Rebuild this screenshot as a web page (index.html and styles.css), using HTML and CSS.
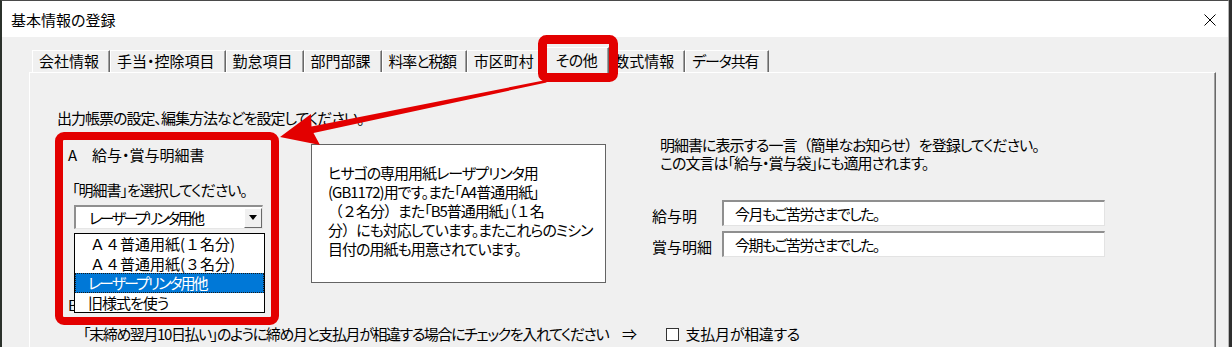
FILE: index.html
```html
<!DOCTYPE html>
<html lang="ja">
<head>
<meta charset="utf-8">
<title>基本情報の登録</title>
<link rel="stylesheet" href="styles.css">
</head>
<body>
<div class="window">
  <div class="titlebar">
    <span class="title">基本情報の登録</span>
    <svg class="close" width="12" height="12" viewBox="0 0 12 12"><path d="M0.5 0.5L11.5 11.5M11.5 0.5L0.5 11.5" stroke="#000" stroke-width="1" fill="none"/></svg>
  </div>
  <div class="client">
    <div class="tabs">
      <div class="tab">会社情報</div>
      <div class="tab">手当・控除項目</div>
      <div class="tab">勤怠項目</div>
      <div class="tab">部門部課</div>
      <div class="tab kana">料率と税額</div>
      <div class="tab">市区町村</div>
      <div class="tab selected">その他</div>
      <div class="tab">数式情報</div>
      <div class="tab kana">データ共有</div>
    </div>
    <div class="panel">
      <p class="intro">出力帳票の設定、編集方法などを設定してください。</p>
      <div class="main-row">
        <div class="col-left">
          <div class="sec-title">A　給与・賞与明細書</div>
          <div class="prompt">「明細書」を選択してください。</div>
          <div class="combo-wrap">
            <div class="combo">
              <span class="combo-text">レーザープリンタ用他</span>
              <span class="combo-btn"><svg width="8" height="5" viewBox="0 0 8 5"><path d="M0 0H8L4 5Z" fill="#000"/></svg></span>
            </div>
            <ul class="droplist">
              <li class="fw">Ａ４普通用紙(１名分)</li>
              <li class="fw">Ａ４普通用紙(３名分)</li>
              <li class="active">レーザープリンタ用他</li>
              <li>旧様式を使う</li>
            </ul>
          </div>
          <div class="sec-title sec-b">B</div>
        </div>
        <div class="desc">ヒサゴの専用用紙レーザプリンタ用<br>(GB1172)用です。また「A4普通用紙」<br><span class="fw">（２名分）</span>また「B5普通用紙」<span class="fw">（１名</span><br>分<span class="fw">）</span>にも対応しています。またこれらのミシン<br>目付の用紙も用意されています。</div>
        <div class="col-right">
          <p class="note">明細書に表示する一言<span class="fw">（</span>簡単なお知らせ<span class="fw">）</span>を登録してください。<br>この文言は「給与・賞与袋」にも適用されます。</p>
          <div class="field first">
            <span class="field-label">給与明</span>
            <div class="input">今月もご苦労さまでした。</div>
          </div>
          <div class="field">
            <span class="field-label">賞与明細</span>
            <div class="input">今期もご苦労さまでした。</div>
          </div>
        </div>
      </div>
      <div class="check-row">
        <span class="check-text">「末締め翌月10日払い」のように締め月と支払月が相違する場合にチェックを入れてください　⇒</span>
        <span class="checkbox"></span>
        <span class="check-label">支払月が相違する</span>
      </div>
    </div>
  </div>
</div>
<svg class="annot" width="1232" height="347" viewBox="0 0 1232 347">
  <rect x="542.5" y="39.5" width="71" height="38" rx="4" fill="none" stroke="#e30000" stroke-width="9"/>
  <rect x="59" y="136" width="216" height="185" rx="5" fill="none" stroke="#e30000" stroke-width="8"/>
  <path d="M280 137 L311 114 L311.5 126.5 L546 80 L546.5 82.5 L313.5 133 L320 145 Z" fill="#e30000"/>
</svg>
</body>
</html>
```

FILE: styles.css
```css
* { box-sizing: border-box; }

html, body {
  margin: 0;
  padding: 0;
}

body {
  width: 1232px;
  height: 347px;
  overflow: hidden;
  position: relative;
  background: #2f2f2f;
  font-family: "Noto Sans CJK JP", "Noto Sans", sans-serif;
  font-feature-settings: "palt";
  font-size: 15px;
  color: #000;
}

.fw {
  font-feature-settings: normal;
}

.window {
  width: 1229px;
  height: 347px;
  border-left: 2px solid #2b312b;
  border-top: 1px solid #4a4a4a;
  border-right: 1px solid #b5b5b5;
  background: #f0f0f0;
  overflow: hidden;
}

.titlebar {
  height: 36px;
  background: #fff;
  display: flex;
  align-items: center;
  justify-content: space-between;
  padding: 0 12px 0 9px;
}

.title {
  line-height: 20px;
  padding-top: 1px;
}

.close { display: block; margin-top: 1px; }

.client {
  background: #f0f0f0;
  padding-top: 10px;
}

.tabs {
  display: flex;
  align-items: flex-end;
  height: 25px;
  margin-left: 30px;
  position: relative;
  z-index: 1;
}

.tab {
  height: 22px;
  line-height: 20px;
  padding: 0 10px 0 6px;
  border-top: 1px solid #fff;
  border-left: 1px solid #fff;
  border-right: 1px solid #696969;
  box-shadow: inset -1px 0 #a0a0a0;
  background: #f0f0f0;
  white-space: nowrap;
}

.tab.kana {
  letter-spacing: -1.2px;
}

.tab.selected {
  height: 26px;
  margin: 0 -2px -1px -2px;
  padding: 1px 11px 0 12px;
  line-height: 21px;
  letter-spacing: -0.5px;
  position: relative;
  z-index: 2;
}

.panel {
  margin-left: 27px;
  width: 1187px;
  height: 300px;
  border-top: 1px solid #fff;
  border-left: 1px solid #fff;
  border-right: 1px solid #696969;
  box-shadow: inset -1px 0 #a0a0a0;
  padding: 35px 0 0 27px;
}

.intro {
  margin: 0;
  line-height: 20px;
  letter-spacing: -1px;
  white-space: nowrap;
}

.main-row {
  display: flex;
  align-items: flex-start;
  margin-top: 8px;
}

.col-left {
  margin-left: 11px;
  width: 197px;
  padding-top: 9px;
  flex: none;
}

.sec-title {
  line-height: 20px;
  white-space: nowrap;
}

.prompt {
  margin-top: 15px;
  padding-left: 4px;
  line-height: 20px;
  letter-spacing: -1px;
  white-space: nowrap;
}

.combo-wrap {
  position: relative;
  margin: 5px 0 0 6px;
}

.combo {
  width: 189px;
  height: 24px;
  display: flex;
  align-items: center;
  background: #fff;
  border-style: solid;
  border-width: 2px 1px 1px 2px;
  border-color: #8f8f8f #e6e6e6 #e6e6e6 #8f8f8f;
}

.combo-text {
  padding-left: 13px;
  line-height: 20px;
  letter-spacing: -2.5px;
  white-space: nowrap;
}

.combo-btn {
  margin-left: auto;
  width: 18px;
  height: 20px;
  background: #f0f0f0;
  border-style: solid;
  border-width: 1px;
  border-color: #fff #696969 #696969 #fff;
  display: flex;
  align-items: center;
  justify-content: center;
}

.combo-btn svg { display: block; }

.droplist {
  position: absolute;
  top: 28px;
  left: 0;
  width: 191px;
  margin: 0;
  padding: 0;
  list-style: none;
  background: #fff;
  border: 1px solid #000;
  z-index: 3;
}

.droplist li {
  height: 19.5px;
  line-height: 19.5px;
  padding-left: 13px;
  letter-spacing: -1px;
  white-space: nowrap;
}

.droplist li.fw {
  letter-spacing: 0;
  padding-left: 15px;
}

.droplist li.active {
  background: #0078d7;
  color: #fff;
  letter-spacing: -2px;
  outline: 1px dotted #1a1a1a;
  outline-offset: -1px;
}

.sec-b {
  margin-top: 66px;
}

.desc {
  flex: none;
  margin: 8px 0 0 46px;
  width: 295px;
  height: 139px;
  border: 1px solid #646464;
  background: #fff;
  padding: 18px 0 0 16px;
  line-height: 19px;
  letter-spacing: -1px;
  white-space: nowrap;
}

.col-right {
  flex: none;
  margin-left: 46px;
}

.note {
  margin: 0 0 0 8px;
  line-height: 18px;
  letter-spacing: -1px;
  white-space: nowrap;
}

.field {
  display: flex;
  align-items: flex-end;
  margin-top: 5px;
}

.field.first {
  margin-top: 28px;
}

.field-label {
  width: 70px;
  line-height: 20px;
  white-space: nowrap;
}

.input {
  width: 383px;
  height: 26px;
  background: #fff;
  border-style: solid;
  border-width: 2px 1px 1px 2px;
  border-color: #8f8f8f #e3e3e3 #e3e3e3 #8f8f8f;
  padding: 2px 0 0 11px;
  line-height: 20px;
  letter-spacing: -1.6px;
  white-space: nowrap;
}

.check-row {
  display: flex;
  align-items: center;
  margin-top: 9px;
  padding-left: 26px;
  line-height: 20px;
  white-space: nowrap;
}

.check-text {
  letter-spacing: -1.4px;
}

.checkbox {
  width: 13px;
  height: 13px;
  border: 1px solid #333;
  background: #fff;
  margin-left: 30px;
  flex: none;
}

.check-label {
  margin-left: 7px;
  letter-spacing: -0.3px;
}

.annot {
  position: absolute;
  top: 0;
  left: 0;
  pointer-events: none;
  z-index: 10;
}
```
